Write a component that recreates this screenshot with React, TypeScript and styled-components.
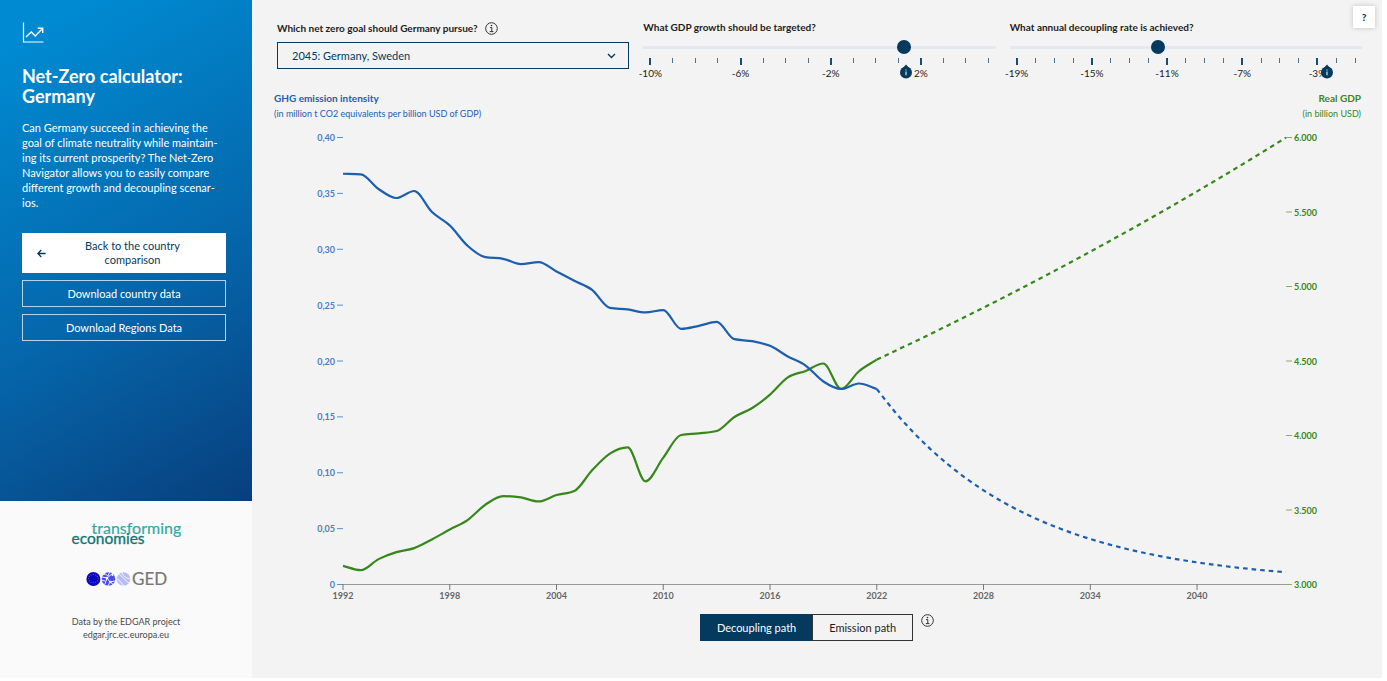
import React, { useState } from "react";
import styled, { createGlobalStyle } from "styled-components";

const navy = "#043a5e";
const blue = "#1c5fae";
const green = "#37871b";

const GlobalStyle = createGlobalStyle`
  *, *::before, *::after { box-sizing: border-box; }
  body {
    margin: 0;
    background: #fff;
    color: #1c1c1c;
    font-family: Lato, "Liberation Sans", sans-serif;
    font-size: 11px;
  }
  button, select, input { font: inherit; }
`;

const Page = styled.div`
  display: flex;
  min-height: calc(100vh - 3px);
  margin: 0 5px 3px 0;
`;

const Sidebar = styled.aside`
  display: flex;
  flex-direction: column;
  flex: 0 0 252px;
`;

const Intro = styled.section`
  flex: 1;
  padding: 22px 26px 22px 22px;
  color: #fff;
  background: linear-gradient(150deg, #008ad1 8%, #0568ad 55%, #083f7d 100%);
`;

const Title = styled.h1`
  margin: 20px 0 14px;
  font-size: 18px;
  line-height: 20px;
  font-weight: 700;
`;

const Lead = styled.p`
  margin: 0 0 23px;
  line-height: 15px;
`;

const ButtonStack = styled.div`
  display: flex;
  flex-direction: column;
  gap: 7px;
`;

const SideButton = styled.button<{ $solid?: boolean }>`
  display: flex;
  align-items: center;
  width: 100%;
  min-height: ${(p) => (p.$solid ? 40 : 27)}px;
  padding: 0 14px;
  border: 1px solid ${(p) => (p.$solid ? "#fff" : "#b8d2e8")};
  background: ${(p) => (p.$solid ? "#fff" : "transparent")};
  color: ${(p) => (p.$solid ? navy : "#fff")};
  line-height: 14px;
  cursor: pointer;
`;

const ButtonText = styled.span<{ $beside?: boolean }>`
  flex: 1;
  padding: ${(p) => (p.$beside ? "0 24px 0 32px" : "0")};
  text-align: center;
`;

const Credits = styled.footer`
  display: flex;
  flex-direction: column;
  align-items: center;
  height: 177px;
  padding-top: 18px;
  background: #fafafa;
  color: #4a4a4a;
`;

const GedLogo = styled.svg`
  margin: 20px 0 26px;
`;

const Source = styled.p`
  margin: 0;
  font-size: 9px;
  line-height: 13px;
  text-align: center;
`;

const SourceLink = styled.a`
  color: inherit;
  text-decoration: none;
`;

const Main = styled.main`
  position: relative;
  flex: 1;
  min-width: 0;
  background: #f3f3f3;
`;

const HelpButton = styled.button`
  position: absolute;
  top: 6px;
  right: 7px;
  width: 22px;
  height: 22px;
  padding: 0;
  border: 0;
  background: #fff;
  color: ${navy};
  font-size: 10px;
  font-weight: 900;
  box-shadow: 0 0 5px rgba(0, 0, 0, 0.2);
  cursor: pointer;
`;

const Controls = styled.div`
  display: grid;
  grid-template-columns: repeat(3, minmax(0, 1fr));
  gap: 14px;
  padding: 20px 20px 0 25px;
`;

const Label = styled.label`
  font-size: 10px;
  line-height: 14px;
  font-weight: 700;
`;

const LabelRow = styled.div`
  display: flex;
  align-items: center;
  gap: 7px;
  height: 16px;
  margin-bottom: 6px;
`;

const InfoButton = styled.button`
  display: flex;
  padding: 0;
  border: 0;
  background: none;
  color: #333;
  cursor: pointer;
`;

const SelectBox = styled.div`
  display: grid;
  align-items: center;
  color: ${navy};
  & > * { grid-area: 1 / 1; }
  & > svg { justify-self: end; margin-right: 13px; pointer-events: none; }
`;

const Select = styled.select`
  appearance: none;
  width: 100%;
  height: 27px;
  padding: 0 30px 0 14px;
  border: 1px solid ${navy};
  border-radius: 0;
  background: transparent;
  color: ${navy};
`;

const SliderField = styled.div`
  display: flex;
  flex-direction: column;
`;

const Range = styled.input`
  appearance: none;
  width: 100%;
  height: 14px;
  margin: 6px 0 4px;
  background: linear-gradient(#e3e9f2, #e3e9f2) center / 100% 3px no-repeat;
  &::-webkit-slider-thumb {
    appearance: none;
    width: 14px;
    height: 14px;
    border-radius: 50%;
    background: ${navy};
  }
`;

const Scale = styled.div`
  position: relative;
  display: flex;
  justify-content: space-between;
  height: 24px;
  margin: 0 6px;
`;

const Tick = styled.div<{ $major: boolean }>`
  display: flex;
  flex-direction: column;
  align-items: center;
  width: 2px;
  font-size: 10px;
  line-height: 14px;
  white-space: nowrap;
  &::before {
    content: "";
    flex: none;
    width: ${(p) => (p.$major ? 2 : 1)}px;
    height: ${(p) => (p.$major ? 7 : 5)}px;
    margin-bottom: 1px;
    background: ${navy};
    opacity: ${(p) => (p.$major ? 0.9 : 0.7)};
  }
`;

const Marker = styled.svg`
  position: absolute;
  top: 6px;
  margin-left: -6px;
`;

const AxisTitles = styled.div`
  display: flex;
  justify-content: space-between;
  padding: 9px 21px 1px 22px;
  font-size: 9px;
  line-height: 16px;
`;

const AxisTitle = styled.div<{ $color: string; $end?: boolean }>`
  color: ${(p) => p.$color};
  text-align: ${(p) => (p.$end ? "right" : "left")};
`;

const AxisName = styled.strong`
  display: block;
  font-size: 10px;
  line-height: 15px;
`;

const Chart = styled.svg`
  display: block;
  width: 100%;
  height: auto;
  font-size: 9px;
  font-weight: 700;
`;

const ModeRow = styled.div`
  display: flex;
  justify-content: center;
  align-items: flex-start;
  gap: 8px;
  padding-top: 11px;
`;

const Modes = styled.div`
  display: flex;
`;

const ModeButton = styled.button<{ $active: boolean }>`
  height: 27px;
  padding: 0 16px;
  border: 1px solid ${(p) => (p.$active ? navy : "#333")};
  background: ${(p) => (p.$active ? navy : "transparent")};
  color: ${(p) => (p.$active ? "#fff" : "#1c1c1c")};
  cursor: pointer;
  & + & { margin-left: -1px; }
`;

const TrendIcon = () => (
  <svg width="22" height="22" viewBox="0 0 22 22" fill="none" stroke="#fff" aria-hidden="true">
    <path d="M1.5 0.5V20H21.5" strokeWidth="1.2" />
    <path d="M4 15L9.3 10L13.2 14L20.3 6.8M15.8 6.3H20.7V11" strokeWidth="1.4" />
  </svg>
);

const InfoIcon = () => (
  <svg width="13" height="13" viewBox="0 0 13 13" fill="none" stroke="currentColor" aria-hidden="true">
    <circle cx="6.5" cy="6.5" r="5.8" />
    <path d="M5 5.6H6.8V9.4M4.8 9.6H8.4" />
    <circle cx="6.5" cy="3.6" r="0.8" fill="currentColor" stroke="none" />
  </svg>
);

const ArrowLeft = () => (
  <svg width="9" height="9" viewBox="0 0 9 9" fill="none" stroke="currentColor" strokeWidth="1.3" aria-hidden="true">
    <path d="M8.6 4.5H1M4.3 1L0.9 4.5L4.3 8" />
  </svg>
);

const Chevron = () => (
  <svg width="9" height="6" viewBox="0 0 9 6" fill="none" stroke="currentColor" strokeWidth="1.4" aria-hidden="true">
    <path d="M1 1L4.5 4.5L8 1" />
  </svg>
);

const TransformingEconomies = () => (
  <svg width="110" height="28" viewBox="0 0 110 28" role="img" aria-label="transforming economies">
    <text x="20.5" y="15" fill="#3aa6a2" fontSize="16" stroke="#3aa6a2" strokeWidth="0.2">transforming</text>
    <text x="0.5" y="25" fill="#0c7673" fontSize="15.5" stroke="#0c7673" strokeWidth="0.3">economies</text>
  </svg>
);

const Ged = () => {
  const stars = Array.from({ length: 12 }, (_, i) => (i * Math.PI) / 6);
  return (
    <GedLogo width="84" height="22" viewBox="0 -2 84 22" role="img" aria-label="GED">
      <circle cx="9.4" cy="10" r="7" fill="#0a06c4" />
      {stars.map((a) => (
        <circle key={a} cx={9.4 + 4.8 * Math.cos(a)} cy={9.6 + 4.2 * Math.sin(a)} r="0.5" fill="#8d7a70" />
      ))}
      <g transform="translate(2 1)">
        <circle cx="22.5" cy="9" r="6.8" fill="#4a4cf2" />
        <g stroke="#fafafa" strokeWidth="0.9" fill="none">
          <path d="M16 7L21 8L27 3M21 8L24 12L29 11M21 8L19 14M24 12L22 16M18 3L22 6L24 1M24 12L28 15M15 10L19 11" />
        </g>
        <g fill="#fafafa">
          <circle cx="21" cy="8" r="1.3" />
          <circle cx="24.3" cy="12" r="1.2" />
          <circle cx="18" cy="4" r="1.1" />
          <circle cx="26.5" cy="5" r="1" />
        </g>
        <circle cx="37.5" cy="9" r="6.8" fill="#b9bbfb" />
        <path d="M32 4C36 5 37 9 43 13M36 2C36 5 39 8 44 9M31 9C34 10 35 13 38 16" stroke="#fafafa" strokeWidth="0.9" fill="none" />
      </g>
      <text x="48" y="16" fontSize="17" fill="#777" stroke="#777" strokeWidth="0.2">GED</text>
    </GedLogo>
  );
};

/* Historic values, one per year from 1992 to 2022 */
const intensity = [
  0.3671, 0.3666, 0.3535, 0.3454, 0.3517, 0.3329, 0.3209, 0.3027, 0.2925, 0.291, 0.2863, 0.2881, 0.2797, 0.2713,
  0.2632, 0.2471, 0.2457, 0.243, 0.2451, 0.2283, 0.231, 0.2346, 0.2191, 0.2173, 0.2131, 0.2036, 0.1955, 0.1812,
  0.1745, 0.1794, 0.1745,
];
const gdp = [
  3122, 3093, 3167, 3214, 3241, 3299, 3366, 3429, 3532, 3590, 3581, 3554, 3597, 3624, 3763, 3875, 3917, 3689, 3848,
  4000, 4011, 4027, 4121, 4181, 4271, 4387, 4430, 4480, 4309, 4428, 4506,
];

const plot = { left: 91, right: 1034, top: 14, bottom: 461 };
const xOf = (year: number) => plot.left + ((year - 1992) / 53) * (plot.right - plot.left);
const yOf = (share: number) => plot.bottom - share * (plot.bottom - plot.top);
const intensityY = (v: number) => yOf(v / 0.4);
const gdpY = (v: number) => yOf((v - 3000) / 3000);

type Point = [number, number];

/* Monotone cubic curve through the points */
function curve(points: Point[]): string {
  const n = points.length;
  const slope = points.slice(1).map((p, i) => (p[1] - points[i][1]) / (p[0] - points[i][0]));
  const tangent = points.map((_, i) => {
    if (i === 0) return slope[0];
    if (i === n - 1) return slope[n - 2];
    const a = slope[i - 1];
    const b = slope[i];
    if (a * b <= 0) return 0;
    return Math.sign(a) * Math.min(Math.abs(a), Math.abs(b), Math.abs(a + b) / 4) * 2;
  });
  let d = `M${points[0][0]},${points[0][1]}`;
  for (let i = 1; i < n; i++) {
    const [x0, y0] = points[i - 1];
    const [x1, y1] = points[i];
    const h = (x1 - x0) / 3;
    d += `C${x0 + h},${y0 + h * tangent[i - 1]} ${x1 - h},${y1 - h * tangent[i]} ${x1},${y1}`;
  }
  return d;
}

const history = (values: number[], y: (v: number) => number) =>
  curve(values.map((v, i): Point => [xOf(1992 + i), y(v)]));

const projection = (start: number, rate: number, y: (v: number) => number) =>
  curve(Array.from({ length: 24 }, (_, i): Point => [xOf(2022 + i), y(start * Math.pow(1 + rate / 100, i))]));

const range = (from: number, to: number, step: number) =>
  Array.from({ length: Math.round((to - from) / step) + 1 }, (_, i) => from + i * step);

const NetZeroChart = ({ growth, decoupling }: { growth: number; decoupling: number }) => (
  <Chart viewBox="0 0 1130 480" role="img" aria-label="GHG emission intensity and real GDP, 1992 to 2045">
    <line x1={plot.left} x2={plot.right} y1={plot.bottom + 0.5} y2={plot.bottom + 0.5} stroke="#999" />
    {range(1992, 2040, 6).map((year) => (
      <g key={year}>
        <line x1={xOf(year)} x2={xOf(year)} y1={plot.bottom} y2={plot.bottom + 6} stroke="#777" />
        <text x={xOf(year)} y={plot.bottom + 15} textAnchor="middle" fill="#666">{year}</text>
      </g>
    ))}
    {range(0, 8, 1).map((i) => (
      <g key={i}>
        <line x1={plot.left - 6} x2={plot.left} y1={yOf(i / 8) + 0.5} y2={yOf(i / 8) + 0.5} stroke="#5f8fc8" />
        <text x={plot.left - 8} y={yOf(i / 8) + 4} textAnchor="end" fill="#4a7fc0">
          {i === 0 ? "0" : (i * 0.05).toFixed(2).replace(".", ",")}
        </text>
      </g>
    ))}
    {range(0, 6, 1).map((i) => (
      <g key={i}>
        <line x1={plot.right} x2={plot.right + 6} y1={yOf(i / 6) + 0.5} y2={yOf(i / 6) + 0.5} stroke="#7db268" />
        <text x={plot.right + 8} y={yOf(i / 6) + 4} fill={green}>
          {((3000 + i * 500) / 1000).toFixed(3)}
        </text>
      </g>
    ))}
    <g fill="none" strokeWidth="2.2">
      <path d={history(gdp, gdpY)} stroke={green} />
      <path d={projection(4506, growth, gdpY)} stroke={green} strokeDasharray="4.6 4" />
      <path d={history(intensity, intensityY)} stroke={blue} />
      <path d={projection(0.1745, decoupling, intensityY)} stroke={blue} strokeDasharray="4.6 4" />
    </g>
  </Chart>
);

type SliderProps = {
  id: string;
  label: string;
  min: number;
  max: number;
  value: number;
  marker: number;
  onChange: (value: number) => void;
};

const Slider = ({ id, label, min, max, value, marker, onChange }: SliderProps) => (
  <SliderField>
    <Label htmlFor={id}>{label}</Label>
    <Range
      id={id}
      type="range"
      min={min}
      max={max}
      step={0.01}
      value={value}
      onChange={(e) => onChange(Number(e.target.value))}
    />
    <Scale>
      {range(min, max, 1).map((v) => {
        const major = (v - min) % 4 === 0 && v < max;
        return (
          <Tick key={v} $major={major}>
            {major && `${v}%`}
          </Tick>
        );
      })}
      <Marker
        style={{ left: `${((marker - min) / (max - min)) * 100}%` }}
        width="14"
        height="15"
        viewBox="0 0 14 15"
        aria-hidden="true"
      >
        <path d="M7 0.5L10.5 4.5H3.5Z" fill={navy} />
        <circle cx="7" cy="8.5" r="6" fill={navy} />
        <path d="M7 7.6V11.2M7 5.4V6.6" stroke="#c9d6e0" strokeWidth="1.3" />
      </Marker>
    </Scale>
  </SliderField>
);

export default function App() {
  const [growth, setGrowth] = useState(1.25);
  const [decoupling, setDecoupling] = useState(-11.5);
  const [mode, setMode] = useState("Decoupling path");

  return (
    <>
      <GlobalStyle />
      <Page>
        <Sidebar>
          <Intro>
            <TrendIcon />
            <Title>Net-Zero calculator: Germany</Title>
            <Lead>
              Can Germany succeed in achieving the goal of climate neutrality while maintain&shy;ing its current
              prosperity? The Net-Zero Navigator allows you to easily compare different growth and decoupling
              scenar&shy;ios.
            </Lead>
            <ButtonStack>
              <SideButton type="button" $solid>
                <ArrowLeft />
                <ButtonText $beside>Back to the country comparison</ButtonText>
              </SideButton>
              <SideButton type="button">
                <ButtonText>Download country data</ButtonText>
              </SideButton>
              <SideButton type="button">
                <ButtonText>Download Regions Data</ButtonText>
              </SideButton>
            </ButtonStack>
          </Intro>
          <Credits>
            <TransformingEconomies />
            <Ged />
            <Source>
              Data by the EDGAR project
              <br />
              <SourceLink href="https://edgar.jrc.ec.europa.eu">edgar.jrc.ec.europa.eu</SourceLink>
            </Source>
          </Credits>
        </Sidebar>
        <Main>
          <Controls>
            <div>
              <LabelRow>
                <Label htmlFor="goal">Which net zero goal should Germany pursue?</Label>
                <InfoButton type="button" aria-label="About the net zero goal">
                  <InfoIcon />
                </InfoButton>
              </LabelRow>
              <SelectBox>
                <Select id="goal" defaultValue="2045">
                  <option value="2045">2045: Germany, Sweden</option>
                </Select>
                <Chevron />
              </SelectBox>
            </div>
            <Slider
              id="growth"
              label="What GDP growth should be targeted?"
              min={-10}
              max={5}
              value={growth}
              marker={1.25}
              onChange={setGrowth}
            />
            <Slider
              id="decoupling"
              label="What annual decoupling rate is achieved?"
              min={-19}
              max={-1}
              value={decoupling}
              marker={-2.6}
              onChange={setDecoupling}
            />
          </Controls>
          <AxisTitles>
            <AxisTitle $color={blue}>
              <AxisName>GHG emission intensity</AxisName>
              (in million t CO2 equivalents per billion USD of GDP)
            </AxisTitle>
            <AxisTitle $color={green} $end>
              <AxisName>Real GDP</AxisName>
              (in billion USD)
            </AxisTitle>
          </AxisTitles>
          <NetZeroChart growth={growth} decoupling={decoupling} />
          <ModeRow>
            <Modes>
              {["Decoupling path", "Emission path"].map((name) => (
                <ModeButton
                  key={name}
                  type="button"
                  $active={mode === name}
                  aria-pressed={mode === name}
                  onClick={() => setMode(name)}
                >
                  {name}
                </ModeButton>
              ))}
            </Modes>
            <InfoButton type="button" aria-label="About the paths">
              <InfoIcon />
            </InfoButton>
          </ModeRow>
          <HelpButton type="button">?</HelpButton>
        </Main>
      </Page>
    </>
  );
}
